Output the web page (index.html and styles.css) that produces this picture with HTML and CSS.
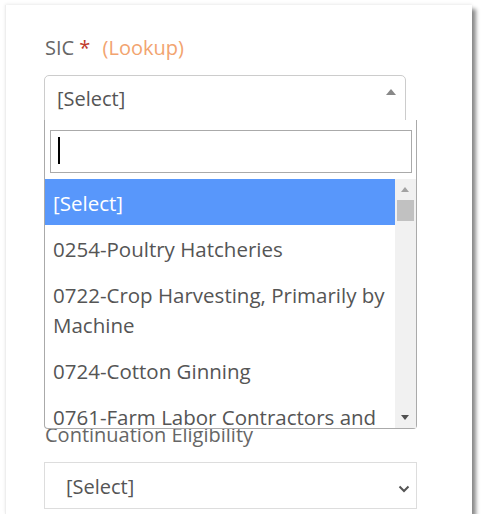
FILE: index.html
```html
<!DOCTYPE html>
<html lang="en">
<head>
  <meta charset="UTF-8" />
  <title>SIC Lookup</title>
  <link rel="stylesheet" href="styles.css">
</head>
<body>

  <div class="card">
    <div class="field sic">
      <label class="label">SIC <span class="req">*</span> <a class="lookup">(Lookup)</a></label>
      <div class="combo open">
        <span class="combo-text">[Select]</span>
        <span class="arrow-up"></span>
      </div>

      <div class="dropdown">
        <div class="search"><span class="caret"></span></div>
        <div class="results-wrap">
          <ul class="results">
            <li class="active">[Select]</li>
            <li>0254-Poultry Hatcheries</li>
            <li>0722-Crop Harvesting, Primarily by Machine</li>
            <li>0724-Cotton Ginning</li>
            <li>0761-Farm Labor Contractors and Crew Leaders</li>
          </ul>
          <div class="scrollbar">
            <span class="sb-up"></span>
            <span class="sb-thumb"></span>
            <span class="sb-down"></span>
          </div>
        </div>
      </div>
    </div>

    <div class="field eligibility">
      <label class="label">Continuation Eligibility</label>
      <div class="plain-select">
        <span>[Select]</span>
        <svg class="chevron" width="12" height="8" viewBox="0 0 12 8">
          <path d="M1.5 1.5 L6 6 L10.5 1.5" fill="none" stroke="#555" stroke-width="2"/>
        </svg>
      </div>
    </div>
  </div>

</body>
</html>
```

FILE: styles.css
```css
body {
  margin: 0;
  background: #fff;
  font-family: "Open Sans", Arial, sans-serif;
  font-size: 20px;
  line-height: 30px;
  color: #555;
}

.card {
  margin: 5px 0 0 5px;
  width: 467px;
  height: 509px;
  box-sizing: border-box;
  padding: 28px 0 0 38px;
  background: #fff;
  border-left: 1px solid #eee;
  box-shadow: 4px 4px 4px rgba(0, 0, 0, 0.45), 0 -1px 3px rgba(0, 0, 0, 0.08);
}

.field {
  position: relative;
}

.label {
  display: block;
  margin: 0 0 12px 1px;
  color: #666;
}

.req {
  color: #c0392b;
}

.lookup {
  margin-left: 7px;
  color: #f2a46f;
}

.combo {
  position: relative;
  width: 362px;
  height: 46px;
  box-sizing: border-box;
  border: 1px solid #ccc;
  border-radius: 5px;
  padding: 8px 0 0 12px;
}

.combo.open {
  border-bottom-left-radius: 0;
  border-bottom-right-radius: 0;
}

.arrow-up {
  position: absolute;
  right: 9px;
  top: 13px;
  border-left: 5px solid transparent;
  border-right: 5px solid transparent;
  border-bottom: 6px solid #888;
}

/* dropdown opened over the rest of the form */
.dropdown {
  position: absolute;
  left: 0;
  top: 87px;
  width: 373px;
  height: 309px;
  box-sizing: border-box;
  border: 1px solid #aaa;
  border-top: none;
  border-radius: 0 0 4px 4px;
  background: #fff;
  z-index: 5;
  display: flex;
  flex-direction: column;
}

.search {
  margin: 10px 4px 6px 5px;
  height: 43px;
  box-sizing: border-box;
  border: 1px solid #aaa;
  padding: 6px 0 0 7px;
}

.caret {
  display: block;
  width: 2px;
  height: 27px;
  background: #000;
}

.results-wrap {
  flex: 1;
  display: flex;
  overflow: hidden;
}

.results {
  list-style: none;
  margin: 0;
  padding: 0;
  width: 351px;
  font-size: 20.5px;
}

.results li {
  padding: 9px 8px 7px;
}

.results li.active {
  background: #5897fb;
  color: #fff;
}

.scrollbar {
  position: relative;
  width: 21px;
  background: #f1f1f1;
}

.sb-up, .sb-down {
  position: absolute;
  left: 6px;
  border-left: 4px solid transparent;
  border-right: 4px solid transparent;
}

.sb-up {
  top: 8px;
  border-bottom: 5px solid #a3a3a3;
}

.sb-down {
  bottom: 8px;
  border-top: 5px solid #505050;
}

.sb-thumb {
  position: absolute;
  top: 21px;
  left: 2px;
  width: 17px;
  height: 21px;
  background: #c1c1c1;
}

.eligibility {
  margin-top: 299px;
}

.plain-select {
  width: 373px;
  height: 47px;
  box-sizing: border-box;
  border: 1px solid #ddd;
  padding: 9px 0 0 21px;
  display: flex;
  align-items: flex-start;
  justify-content: space-between;
}

.chevron {
  margin: 13px 6px 0 0;
}
```
